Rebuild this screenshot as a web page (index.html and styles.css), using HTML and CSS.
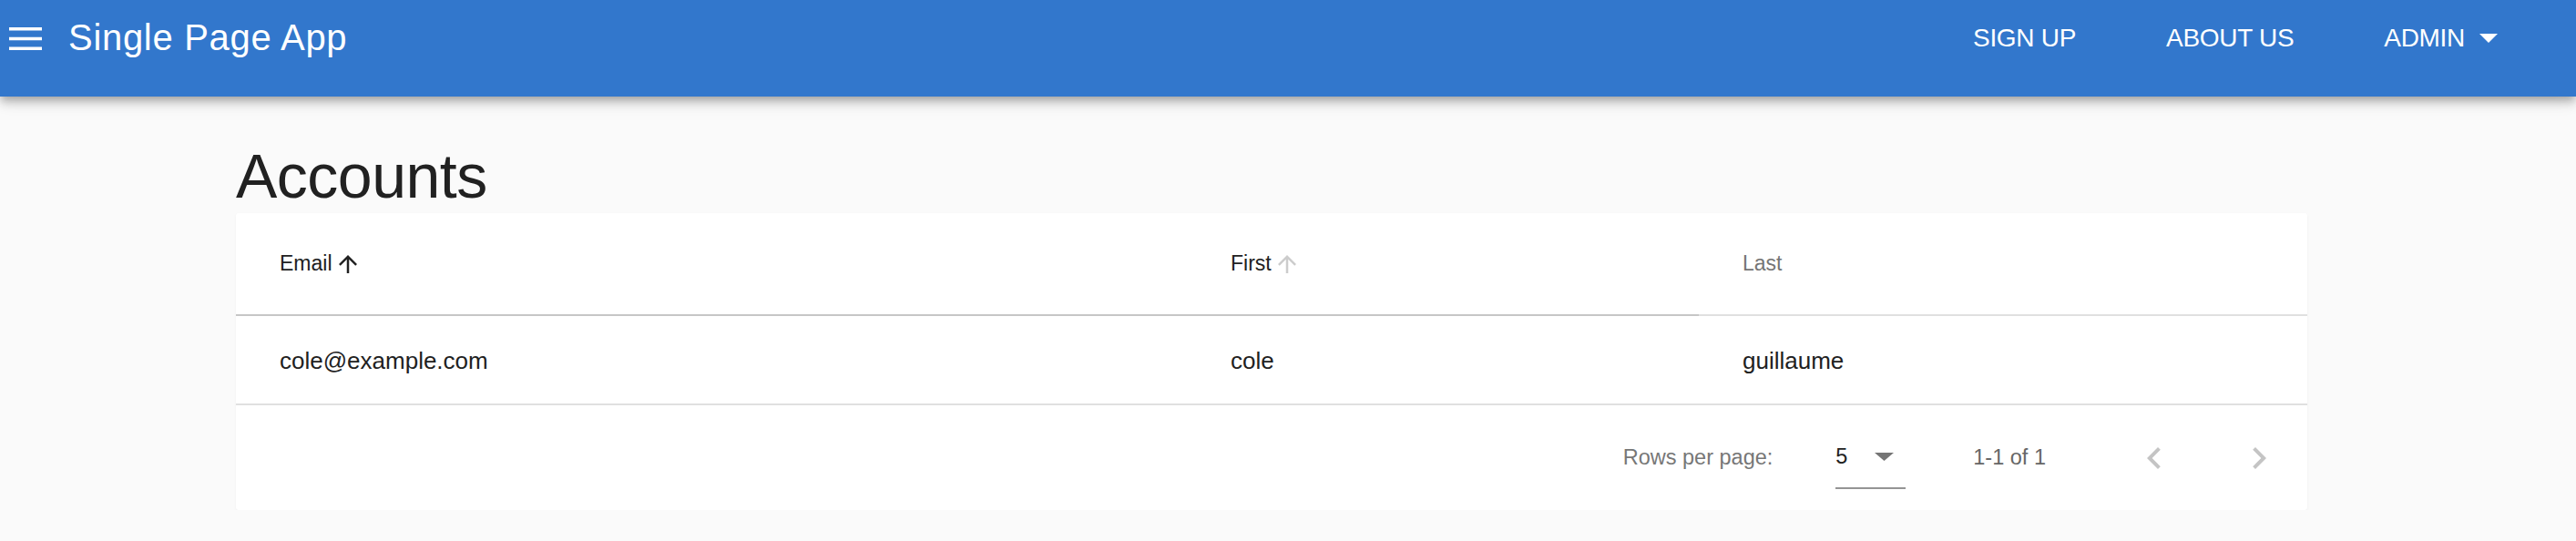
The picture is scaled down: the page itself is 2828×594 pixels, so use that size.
FILE: index.html
```html
<!DOCTYPE html>
<html lang="en">
<head>
<meta charset="utf-8">
<title>Single Page App</title>
<link rel="stylesheet" href="styles.css">
</head>
<body>
<header class="toolbar">
  <div class="toolbar-row">
    <svg class="menu-icon" width="36" height="25" viewBox="0 0 36 25"><rect x="0" y="0" width="36" height="3.5" fill="#fff"/><rect x="0" y="10.75" width="36" height="3.5" fill="#fff"/><rect x="0" y="21.5" width="36" height="3.5" fill="#fff"/></svg>
    <div class="app-title">Single Page App</div>
    <nav class="nav">
      <a class="nav-item">SIGN UP</a>
      <a class="nav-item">ABOUT US</a>
      <a class="nav-item nav-admin">ADMIN<svg class="drop-icon" width="20" height="10" viewBox="0 0 20 10"><polygon points="0,0 20,0 10,10" fill="#fff"/></svg></a>
    </nav>
  </div>
</header>
<main class="main">
  <h1 class="page-title">Accounts</h1>
  <div class="card">
    <div class="table">
      <div class="th th-dark th-line-dark">Email<svg class="sort-icon" width="30" height="30" viewBox="0 0 24 24"><path d="M4 12l1.41 1.41L11 7.83V20h2V7.83l5.58 5.59L20 12l-8-8-8 8z" fill="#212121"/></svg></div>
      <div class="th th-dark th-line-dark">First<svg class="sort-icon" width="30" height="30" viewBox="0 0 24 24"><path d="M4 12l1.41 1.41L11 7.83V20h2V7.83l5.58 5.59L20 12l-8-8-8 8z" fill="#cccccc"/></svg></div>
      <div class="th th-light">Last</div>
      <div class="td">cole@example.com</div>
      <div class="td">cole</div>
      <div class="td">guillaume</div>
    </div>
    <div class="footer">
      <span class="rows-label">Rows per page:</span>
      <div class="select"><span class="select-value">5</span><svg class="select-arrow" width="21" height="9" viewBox="0 0 21 9"><polygon points="0,0 21,0 10.5,9" fill="#757575"/></svg></div>
      <span class="range">1-1 of 1</span>
      <svg class="page-btn prev" width="48" height="48" viewBox="0 0 24 24"><path d="M15.41 7.41L14 6l-6 6 6 6 1.41-1.41L10.83 12z" fill="#c4c4c4"/></svg>
      <svg class="page-btn" width="48" height="48" viewBox="0 0 24 24"><path d="M10 6L8.59 7.41 13.17 12l-4.58 4.59L10 18l6-6z" fill="#c4c4c4"/></svg>
    </div>
  </div>
</main>
</body>
</html>
```
FILE: styles.css
```css
body {
  margin: 0;
  background: #fafafa;
  font-family: "Liberation Sans", Arial, Helvetica, sans-serif;
  color: #212121;
}

.toolbar {
  position: relative;
  z-index: 1;
  height: 106px;
  background: #3277cc;
  color: #fff;
  box-shadow: 0 4px 8px -2px rgba(0,0,0,.2), 0 8px 10px 0 rgba(0,0,0,.14), 0 2px 20px 0 rgba(0,0,0,.12);
}

.toolbar-row {
  height: 84px;
  display: flex;
  align-items: center;
  padding-left: 10px;
  padding-right: 86px;
}

.menu-icon {
  display: block;
  flex: none;
}

.app-title {
  margin-left: 29px;
  font-size: 40px;
  line-height: 44px;
  letter-spacing: 0.7px;
  padding-bottom: 2px;
}

.nav {
  margin-left: auto;
  display: flex;
  align-items: center;
  gap: 99px;
}

.nav-item {
  font-size: 28px;
  line-height: 32px;
  letter-spacing: -0.3px;
  color: #fff;
}

.nav-admin {
  display: flex;
  align-items: center;
}

.drop-icon {
  display: block;
  margin-left: 16px;
}

.main {
  padding-left: 259px;
}

.page-title {
  margin: 53px 0 7px;
  font-size: 68px;
  line-height: 68px;
  font-weight: 400;
  letter-spacing: -0.5px;
  color: #212121;
}

.card {
  width: 2274px;
  background: #fff;
  border-radius: 3px;
  box-shadow: 0 1px 3px rgba(0,0,0,.05);
}

.table {
  display: grid;
  grid-template-columns: 1044px 562px 668px;
}

.th {
  height: 111px;
  padding: 0 48px;
  display: flex;
  align-items: center;
  font-size: 23px;
  border-bottom: 2px solid #e0e0e0;
}

.th-dark {
  color: #212121;
}

.th-line-dark {
  border-bottom-color: #c6c6c6;
}

.th-light {
  color: #757575;
}

.sort-icon {
  display: block;
  margin-left: 2px;
}

.td {
  height: 93px;
  padding: 3px 48px 0;
  display: flex;
  align-items: center;
  font-size: 26px;
  color: #212121;
  border-bottom: 2px solid #e0e0e0;
}

.footer {
  height: 115px;
  display: flex;
  align-items: center;
  justify-content: flex-end;
  padding-right: 29px;
  font-size: 23.5px;
  color: #777;
}

.rows-label {
  margin-right: 69px;
}

.select {
  width: 77px;
  height: 67px;
  display: flex;
  align-items: center;
  border-bottom: 2px solid #949494;
  margin-right: 74px;
}

.select-value {
  color: #212121;
}

.select-arrow {
  display: block;
  margin-left: auto;
  margin-right: 13px;
}

.range {
  margin-right: 95px;
  color: #666;
}

.page-btn {
  display: block;
}

.prev {
  margin-right: 67px;
}
```
